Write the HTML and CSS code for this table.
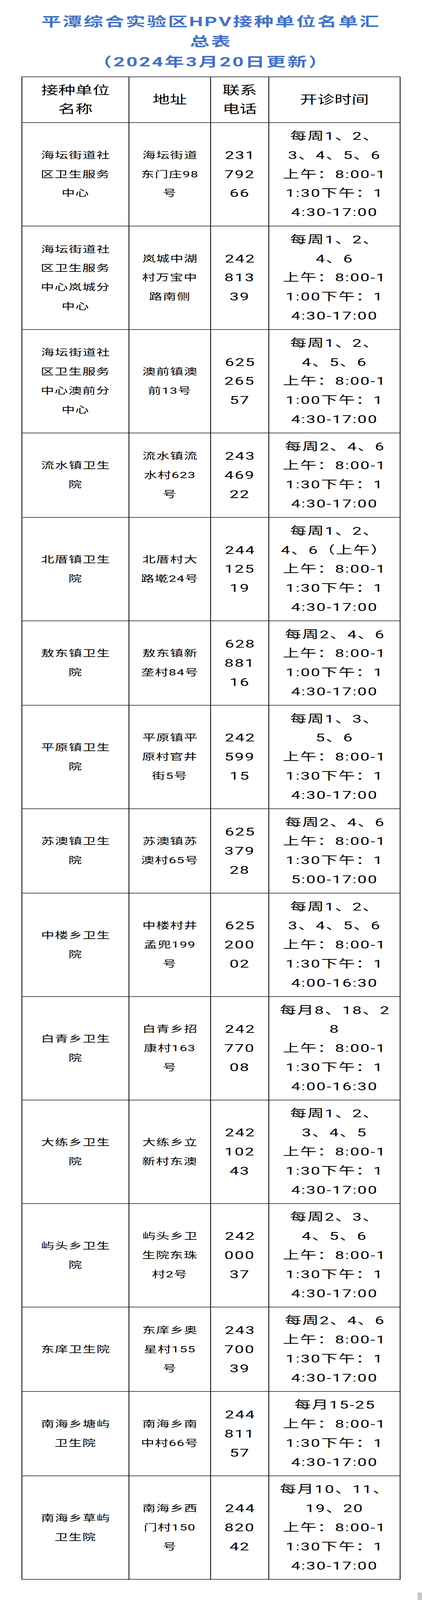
FILE: index.html
```html
<!DOCTYPE html>
<html lang="zh-CN">
<head>
<meta charset="utf-8">
<title>平潭综合实验区HPV接种单位名单汇总表</title>
<link rel="stylesheet" href="styles.css">
<script src="app.js"></script>
</head>
<body>
<div class="frame">
<div class="page">
<div class="topbar"></div>
<h1 class="title">平潭综合实验区HPV接种单位名单汇<br>总表<br>（2024年3月20日更新）</h1>
<div class="sheet">
  <div class="cell head">接种单位<br>名称</div>
  <div class="cell head">地址</div>
  <div class="cell head">联系<br>电话</div>
  <div class="cell head">开诊时间</div>

  <div class="cell small">海坛街道社<br>区卫生服务<br>中心</div>
  <div class="cell small">海坛街道<br>东门庄98<br>号</div>
  <div class="cell big">231<br>792<br>66</div>
  <div class="cell big">每周1、2、<br>3、4、5、6<br>上午：8:00-1<br>1:30下午：1<br>4:30-17:00</div>

  <div class="cell small">海坛街道社<br>区卫生服务<br>中心岚城分<br>中心</div>
  <div class="cell small">岚城中湖<br>村万宝中<br>路南侧</div>
  <div class="cell big">242<br>813<br>39</div>
  <div class="cell big">每周1、2、<br>4、6<br>上午：8:00-1<br>1:00下午：1<br>4:30-17:00</div>

  <div class="cell small">海坛街道社<br>区卫生服务<br>中心澳前分<br>中心</div>
  <div class="cell small">澳前镇澳<br>前13号</div>
  <div class="cell big">625<br>265<br>57</div>
  <div class="cell big">每周1、2、<br>4、5、6<br>上午：8:00-1<br>1:00下午：1<br>4:30-17:00</div>

  <div class="cell small">流水镇卫生<br>院</div>
  <div class="cell small">流水镇流<br>水村623<br>号</div>
  <div class="cell big">243<br>469<br>22</div>
  <div class="cell big">每周2、4、6<br>上午：8:00-1<br>1:30下午：1<br>4:30-17:00</div>

  <div class="cell small">北厝镇卫生<br>院</div>
  <div class="cell small">北厝村大<br>路墘24号</div>
  <div class="cell big">244<br>125<br>19</div>
  <div class="cell big">每周1、2、<br>4、6（上午）<br>上午：8:00-1<br>1:30下午：1<br>4:30-17:00</div>

  <div class="cell small">敖东镇卫生<br>院</div>
  <div class="cell small">敖东镇新<br>垄村84号</div>
  <div class="cell big">628<br>881<br>16</div>
  <div class="cell big">每周2、4、6<br>上午：8:00-1<br>1:00下午：1<br>4:30-17:00</div>

  <div class="cell small">平原镇卫生<br>院</div>
  <div class="cell small">平原镇平<br>原村官井<br>街5号</div>
  <div class="cell big">242<br>599<br>15</div>
  <div class="cell big">每周1、3、<br>5、6<br>上午：8:00-1<br>1:30下午：1<br>4:30-17:00</div>

  <div class="cell small">苏澳镇卫生<br>院</div>
  <div class="cell small">苏澳镇苏<br>澳村65号</div>
  <div class="cell big">625<br>379<br>28</div>
  <div class="cell big">每周2、4、6<br>上午：8:00-1<br>1:30下午：1<br>5:00-17:00</div>

  <div class="cell small">中楼乡卫生<br>院</div>
  <div class="cell small">中楼村井<br>孟兜199<br>号</div>
  <div class="cell big">625<br>200<br>02</div>
  <div class="cell big">每周1、2、<br>3、4、5、6<br>上午：8:00-1<br>1:30下午：1<br>4:00-16:30</div>

  <div class="cell small">白青乡卫生<br>院</div>
  <div class="cell small">白青乡招<br>康村163<br>号</div>
  <div class="cell big">242<br>770<br>08</div>
  <div class="cell big">每月8、18、2<br>8<br>上午：8:00-1<br>1:30下午：1<br>4:00-16:30</div>

  <div class="cell small">大练乡卫生<br>院</div>
  <div class="cell small">大练乡立<br>新村东澳</div>
  <div class="cell big">242<br>102<br>43</div>
  <div class="cell big">每周1、2、<br>3、4、5<br>上午：8:00-1<br>1:30下午：1<br>4:30-17:00</div>

  <div class="cell small">屿头乡卫生<br>院</div>
  <div class="cell small">屿头乡卫<br>生院东珠<br>村2号</div>
  <div class="cell big">242<br>000<br>37</div>
  <div class="cell big">每周2、3、<br>4、5、6<br>上午：8:00-1<br>1:30下午：1<br>4:30-17:00</div>

  <div class="cell small">东庠卫生院</div>
  <div class="cell small">东庠乡奥<br>星村155<br>号</div>
  <div class="cell big">243<br>700<br>39</div>
  <div class="cell big">每周2、4、6<br>上午：8:00-1<br>1:30下午：1<br>4:30-17:00</div>

  <div class="cell small">南海乡塘屿<br>卫生院</div>
  <div class="cell small">南海乡南<br>中村66号</div>
  <div class="cell big">244<br>811<br>57</div>
  <div class="cell big">每月15-25<br>上午：8:00-1<br>1:30下午：1<br>4:30-17:00</div>

  <div class="cell small">南海乡草屿<br>卫生院</div>
  <div class="cell small">南海乡西<br>门村150<br>号</div>
  <div class="cell big">244<br>820<br>42</div>
  <div class="cell big">每月10、11、<br>19、20<br>上午：8:00-1<br>1:30下午：1<br>4:30-17:00</div>
</div>
</div>
</div>
<div class="scroll-thumb"></div>
</body>
</html>
```
FILE: styles.css
```css
:root {
  --sy: 0.66895;
}

html, body {
  margin: 0;
  padding: 0;
  background: #ffffff;
}

body {
  font-family: Roboto, "Noto Sans CJK SC", "Noto Sans", sans-serif;
  color: #000000;
  overflow: hidden;
}

/* the 6123px-tall sheet is fitted into the height of the browser frame */
.frame {
  height: 100vh;
  overflow: hidden;
}

.page {
  width: 1080px;
  transform: scaleY(var(--sy));
  transform-origin: 0 0;
}

.topbar {
  height: 21px;
  border-bottom: 1px solid #ededed;
}

.title {
  margin: 23px 0 0;
  font-size: 50px;
  font-weight: 700;
  line-height: 77px;
  letter-spacing: 4px;
  text-align: center;
  color: #4472c4;
}

.sheet {
  display: grid;
  grid-template-columns: 274px 209px 149px 336px;
  width: 970px;
  box-sizing: border-box;
  margin: 17px 0 0 55px;
  border-left: 2px solid #000;
  border-top: 2px solid #000;
}

.cell {
  box-sizing: border-box;
  display: flex;
  align-items: center;
  justify-content: center;
  text-align: center;
  white-space: nowrap;
  border-right: 2px solid #000;
  border-bottom: 2px solid #000;
  padding: 14px 0 15px;
  line-height: 73px;
  font-weight: 400;
}

.head {
  font-size: 44px;
  line-height: 72px;
}

.small {
  font-size: 34px;
  letter-spacing: 1.5px;
  text-indent: 1.5px;
}

.big {
  font-size: 42px;
  letter-spacing: 2.5px;
  text-indent: 2.5px;
}

.scroll-thumb {
  position: fixed;
  right: 0;
  bottom: 0;
  width: 11px;
  height: calc(28px * var(--sy));
  background: #c6c6c6;
}
```
FILE: app.js
```js
// Fit the 6123px-tall sheet into the actual height of the browser frame.
(function () {
  var sy = Math.min(1, window.innerHeight / 6123);
  document.documentElement.style.setProperty('--sy', String(sy));
})();
```
